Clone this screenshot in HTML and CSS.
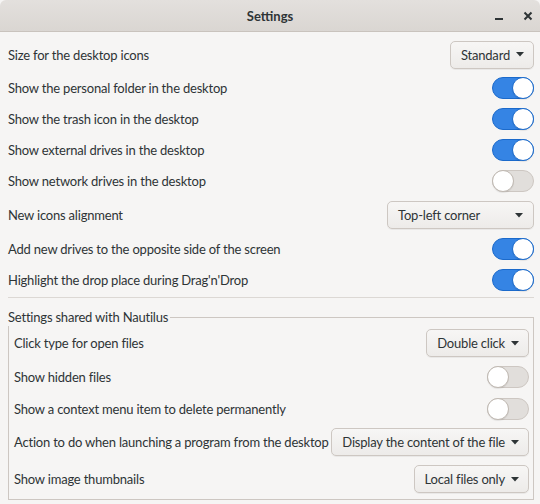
FILE: index.html
```html
<!DOCTYPE html>
<html>
<head>
<meta charset="utf-8">
<link rel="stylesheet" href="styles.css">
</head>
<body>
<div class="window">
  <header class="titlebar">
    <div class="title">Settings</div>
    <div class="controls">
      <svg class="wm-icon" width="16" height="16" viewBox="0 0 16 16"><rect x="4" y="10" width="8" height="2" fill="#2e3436"/></svg>
      <svg class="wm-icon" width="16" height="16" viewBox="0 0 16 16"><path d="M4.5 4.5 L11.5 11.5 M11.5 4.5 L4.5 11.5" stroke="#2e3436" stroke-width="2"/></svg>
    </div>
  </header>
  <main class="content">
    <div class="row row-combo first">
      <span class="label">Size for the desktop icons</span>
      <div class="button">Standard <svg class="arrow" width="8" height="5" viewBox="0 0 8 5"><path d="M0 0 H8 L4 4.5 Z" fill="#2e3436"/></svg></div>
    </div>
    <div class="row row-switch">
      <span class="label">Show the personal folder in the desktop</span>
      <span class="switch on"><span class="knob"></span></span>
    </div>
    <div class="row row-switch">
      <span class="label">Show the trash icon in the desktop</span>
      <span class="switch on"><span class="knob"></span></span>
    </div>
    <div class="row row-switch">
      <span class="label">Show external drives in the desktop</span>
      <span class="switch on"><span class="knob"></span></span>
    </div>
    <div class="row row-switch">
      <span class="label">Show network drives in the desktop</span>
      <span class="switch"><span class="knob"></span></span>
    </div>
    <div class="row row-combo align">
      <span class="label">New icons alignment</span>
      <div class="button wide">Top-left corner <svg class="arrow" width="8" height="5" viewBox="0 0 8 5"><path d="M0 0 H8 L4 4.5 Z" fill="#2e3436"/></svg></div>
    </div>
    <div class="row row-switch">
      <span class="label">Add new drives to the opposite side of the screen</span>
      <span class="switch on"><span class="knob"></span></span>
    </div>
    <div class="row row-switch">
      <span class="label">Highlight the drop place during Drag'n'Drop</span>
      <span class="switch on"><span class="knob"></span></span>
    </div>
    <div class="sep"></div>
    <fieldset class="frame">
      <legend class="frame-label">Settings shared with Nautilus</legend>
      <div class="frame-body">
        <div class="row frow-a">
          <span class="label">Click type for open files</span>
          <div class="button">Double click <svg class="arrow" width="8" height="5" viewBox="0 0 8 5"><path d="M0 0 H8 L4 4.5 Z" fill="#2e3436"/></svg></div>
        </div>
        <div class="row frow-b">
          <span class="label">Show hidden files</span>
          <span class="switch"><span class="knob"></span></span>
        </div>
        <div class="row frow-c">
          <span class="label">Show a context menu item to delete permanently</span>
          <span class="switch"><span class="knob"></span></span>
        </div>
        <div class="row frow-d">
          <span class="label">Action to do when launching a program from the desktop</span>
          <div class="button">Display the content of the file <svg class="arrow" width="8" height="5" viewBox="0 0 8 5"><path d="M0 0 H8 L4 4.5 Z" fill="#2e3436"/></svg></div>
        </div>
        <div class="row frow-e">
          <span class="label">Show image thumbnails</span>
          <div class="button">Local files only <svg class="arrow" width="8" height="5" viewBox="0 0 8 5"><path d="M0 0 H8 L4 4.5 Z" fill="#2e3436"/></svg></div>
        </div>
      </div>
    </fieldset>
  </main>
</div>
</body>
</html>
```

FILE: styles.css
```css
* { box-sizing: border-box; }
html, body {
  margin: 0;
  padding: 0;
  background: #f6f5f4;
}
body {
  font-family: "Lato", "Noto Sans", sans-serif;
  font-size: 13px;
  letter-spacing: -0.2px;
  color: #2e3436;
}
.window {
  width: 540px;
  height: 504px;
  background: #f6f5f4;
  display: flex;
  flex-direction: column;
  overflow: hidden;
}
.titlebar {
  height: 32px;
  flex: 0 0 32px;
  background: linear-gradient(#e3e0dd, #dad6d2);
  border-bottom: 1px solid #c9c3bd;
  border-radius: 6px 6px 0 0;
  display: flex;
  align-items: center;
  justify-content: center;
  position: relative;
}
.title {
  font-weight: bold;
  font-size: 13px;
  letter-spacing: 0;
  color: #2e3436;
}
.controls {
  position: absolute;
  right: 4px;
  top: 8px;
  display: flex;
  gap: 13px;
}
.content {
  padding: 5px 6px 0 8px;
  display: flex;
  flex-direction: column;
}
.row {
  display: flex;
  align-items: center;
  justify-content: space-between;
}
.label { white-space: nowrap; }
.row-switch { height: 31px; }
.row-combo.first { height: 35px; }
.row-combo.align { height: 37px; padding-top: 1px; }
.button {
  flex: 0 0 auto;
  height: 28px;
  padding: 0 9px 0 10px;
  display: flex;
  align-items: center;
  gap: 6px;
  border: 1px solid #cdc7c2;
  border-radius: 5px;
  background: linear-gradient(#f7f6f5, #edebe9);
  box-shadow: 0 1px 0 rgba(0,0,0,0.05);
  white-space: nowrap;
}
.button.wide {
  width: 147px;
  justify-content: space-between;
  padding-left: 10px;
  padding-right: 10px;
}
.arrow { flex: 0 0 auto; }
.switch {
  flex: 0 0 auto;
  width: 42px;
  height: 22px;
  border-radius: 11px;
  border: 1px solid #cdc7c2;
  background: #e1dedb;
  display: flex;
  align-items: center;
  justify-content: flex-start;
}
.switch.on {
  background: #3584e4;
  border-color: #1b6acb;
  justify-content: flex-end;
}
.knob {
  width: 22px;
  height: 22px;
  margin: -1px;
  border-radius: 50%;
  background: #ffffff;
  border: 1px solid #bfb8b1;
  box-shadow: 0 1px 1px rgba(0,0,0,0.08);
}
.switch.on .knob { border-color: #1b6acb; }
.sep {
  height: 1px;
  background: #dcd8d4;
  margin: 2px 0 0 0;
}
.frame {
  margin: 11px 0 0 0;
  padding: 0;
  border: 1px solid #cdc7c2;
  border-radius: 0;
  width: 526px;
  height: 191px;
  min-inline-size: 0;
}
.frame-label {
  padding: 0 2px 0 0;
  margin: 0 0 0 -1px;
  font-size: 13px;
  line-height: 17px;
}
.frame-body {
  padding: 0 4px 0 5px;
  display: flex;
  flex-direction: column;
}
.frow-a { height: 34px; }
.frow-b { height: 33px; }
.frow-c { height: 31px; }
.frow-d { height: 36px; }
.frow-e { height: 38px; }
```
